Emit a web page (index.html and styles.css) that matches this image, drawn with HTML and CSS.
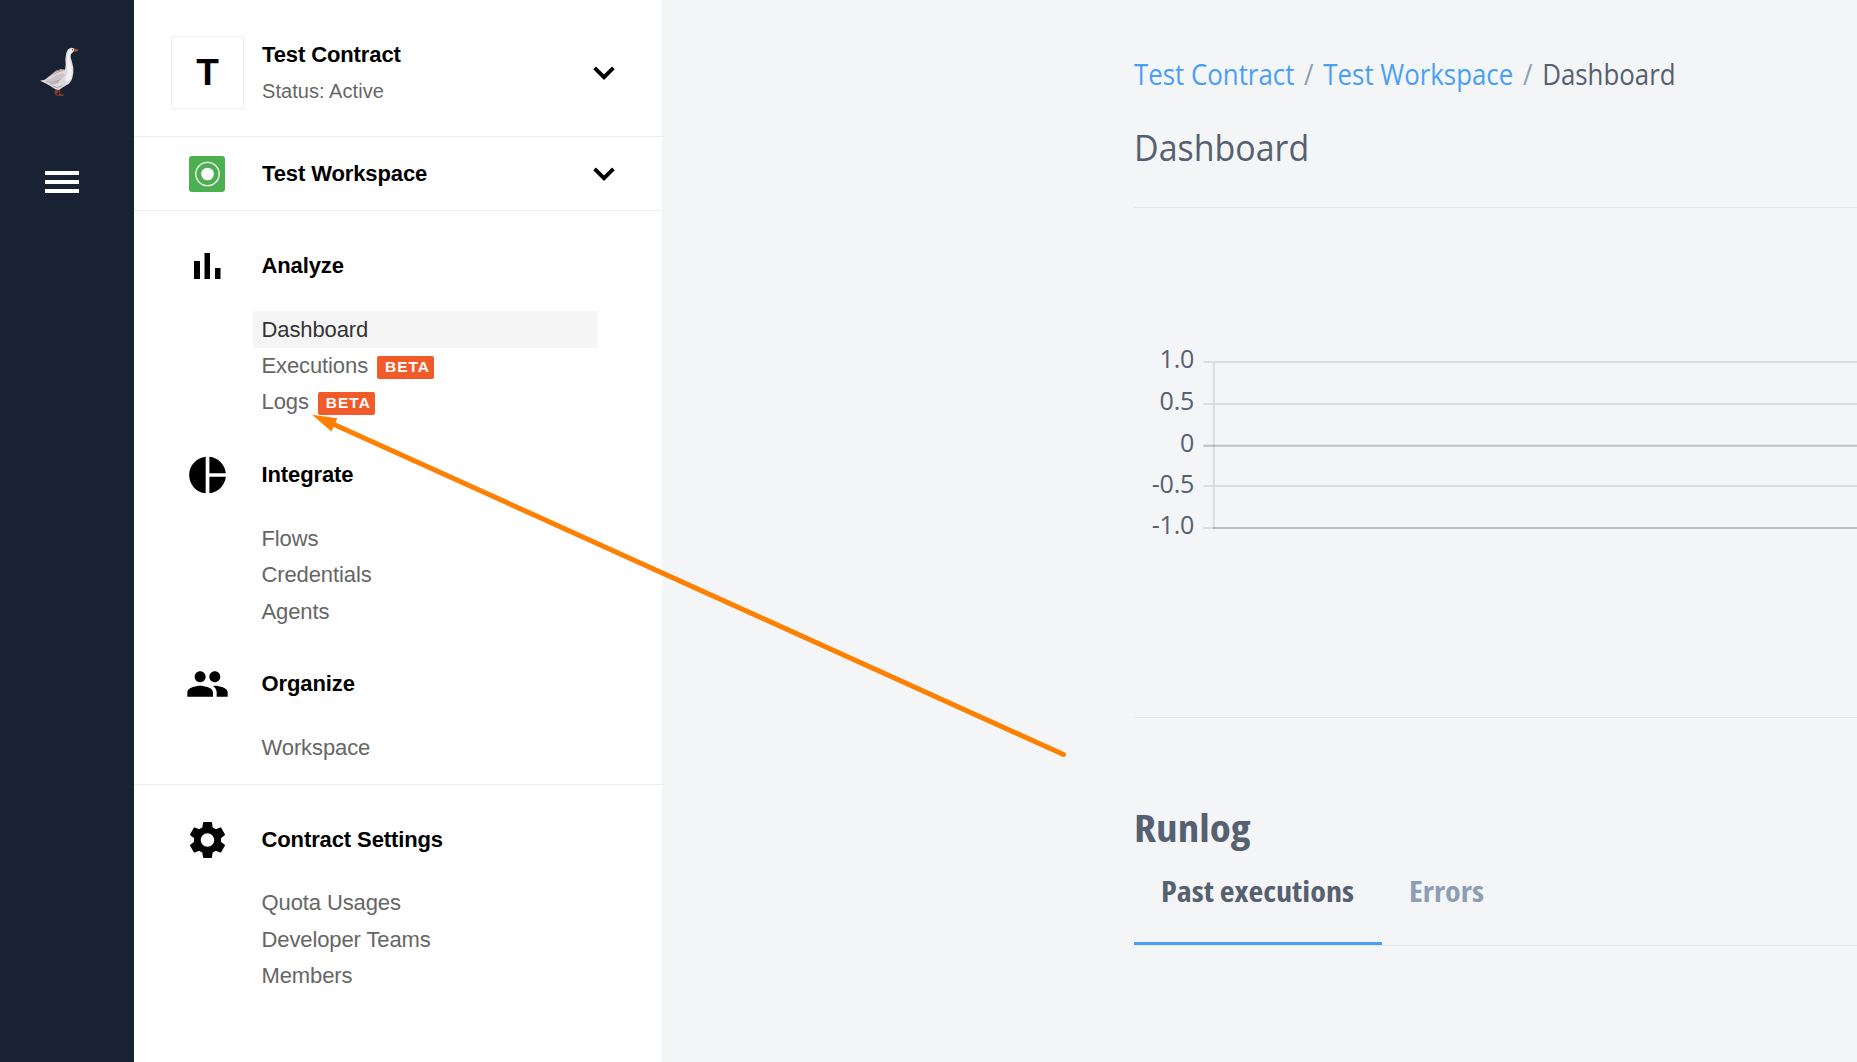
FILE: index.html
```
<!DOCTYPE html>
<html lang="en">
<head>
<meta charset="utf-8">
<title>Dashboard</title>
<link rel="stylesheet" href="styles.css">
</head>
<body>
<div class="app">
  <aside class="rail">
    <svg class="goose" viewBox="60 50 120 150" aria-label="Goose">
      <path d="M108 176l-5 9 3 9 8 3-3-7 7-11zM116 177l2 13-5 7h18l-1-5-9-2-1-12z" fill="#7d3b27"/>
      <path d="M60 151l14-3 12-9 12-9 10-9 14-4 13 1 2-14-1-18 3-19 5-10 9-5 9 2 2 5-5 7-6 5-1 10 4 14 4 17v16l-4 19-9 13-17 10-13 9-11-2-14-9-13-8-9-4z" fill="#dddadb"/>
      <path d="M142 72l4-10 8-5 6 3-6 8-5 6 0 14 4 16 4 20-4 20-12 12-5-10 6-22-2-26z" fill="#f1f0f3"/>
      <path d="M75 150l19-6 18-11 16-4 7 6-11 12-13 9-17-2z" fill="#c9c3c4"/>
      <path d="M78 154l17 2 14-2 13-7M89 161l15-1 12-5M101 133l13-8 16-5M98 167l13 5 16-6" fill="none" stroke="#a0928f" stroke-width="2.4"/>
      <path d="M82 142l24-19 15-4" fill="none" stroke="#8b6b60" stroke-width="2.4"/>
      <path d="M161 54l8 3 8 1-4 4-9 3z" fill="#b1512e"/>
      <rect x="156" y="57" width="3" height="3" fill="#29272c"/>
    </svg>
    <div class="burger"><i></i><i></i><i></i></div>
  </aside>

  <nav class="side">
    <div class="contract">
      <div class="avatar">T</div>
      <div class="who"><b>Test Contract</b><span>Status: Active</span></div>
      <svg class="chev" viewBox="0 0 22 14"><path d="M1.6 1.8L11 11.2l9.400-9.400" /></svg>
    </div>
    <div class="workspace">
      <svg class="ws" viewBox="0 0 36 36"><rect width="36" height="36" rx="3" fill="#4caf50"/><circle cx="18.500" cy="18" r="11.700" fill="none" stroke="#fff" stroke-width="1.300"/><circle cx="18.500" cy="18" r="6.300" fill="#fff"/></svg>
      <b>Test Workspace</b>
      <svg class="chev" viewBox="0 0 22 14"><path d="M1.6 1.8L11 11.2l9.400-9.400" /></svg>
    </div>
    <div class="groups">
      <section>
        <h3><svg viewBox="0 0 44 44"><path d="M8.500 17h6v18h-6zM19 9h5.500v26H19zM29.500 24H35v11h-5.500z"/></svg>Analyze</h3>
        <ul><li class="on">Dashboard</li><li>Executions<em>BETA</em></li><li>Logs<em>BETA</em></li></ul>
      </section>
      <section>
        <h3><svg viewBox="0 0 24 24"><path d="M11 2v20c-5.070-.5-9-4.790-9-10s3.930-9.500 9-10zm2.030 0v8.990H22c-.47-4.740-4.240-8.520-8.970-8.990zm0 11.010V22c4.740-.47 8.500-4.250 8.970-8.990h-8.970z"/></svg>Integrate</h3>
        <ul><li>Flows</li><li>Credentials</li><li>Agents</li></ul>
      </section>
      <section>
        <h3><svg viewBox="0 0 24 24"><path d="M16 11c1.660 0 2.990-1.340 2.990-3S17.660 5 16 5c-1.660 0-3 1.340-3 3s1.340 3 3 3zm-8 0c1.660 0 2.990-1.340 2.990-3S9.660 5 8 5C6.340 5 5 6.340 5 8s1.340 3 3 3zm0 2c-2.330 0-7 1.170-7 3.500V19h14v-2.500c0-2.330-4.670-3.500-7-3.500zm8 0c-.29 0-.62.02-.97.05 1.160.84 1.970 1.970 1.970 3.450V19h6v-2.500c0-2.330-4.670-3.500-7-3.500z"/></svg>Organize</h3>
        <ul><li>Workspace</li></ul>
      </section>
    </div>
    <div class="groups settings">
      <section>
        <h3><svg class="gear" viewBox="0 0 24 24"><path d="M19.14,12.94c0.04-0.3,0.06-0.61,0.06-0.94c0-0.32-0.02-0.64-0.07-0.94l2.03-1.58c0.18-0.14,0.23-0.41,0.12-0.61 l-1.92-3.32c-0.12-0.22-0.37-0.29-0.59-0.22l-2.39,0.96c-0.5-0.38-1.03-0.7-1.62-0.94L14.4,2.81c-0.04-0.24-0.24-0.41-0.48-0.41 h-3.84c-0.24,0-0.43,0.17-0.47,0.41L9.25,5.35C8.66,5.59,8.12,5.92,7.63,6.29L5.24,5.33c-0.22-0.08-0.47,0-0.59,0.22L2.74,8.87 C2.62,9.08,2.66,9.34,2.86,9.48l2.03,1.58C4.84,11.36,4.8,11.69,4.8,12s0.02,0.64,0.07,0.94l-2.03,1.58 c-0.18,0.14-0.23,0.41-0.12,0.61l1.92,3.32c0.12,0.22,0.37,0.29,0.59,0.22l2.39-0.96c0.5,0.38,1.03,0.7,1.62,0.94l0.36,2.54 c0.05,0.24,0.24,0.41,0.48,0.41h3.84c0.24,0,0.44-0.17,0.47-0.41l0.36-2.54c0.59-0.24,1.13-0.56,1.62-0.94l2.39,0.96 c0.22,0.08,0.47,0,0.59-0.22l1.92-3.32c0.12-0.22,0.07-0.47-0.12-0.61L19.14,12.94z M12,15.6c-1.98,0-3.6-1.62-3.6-3.6 s1.62-3.6,3.6-3.6s3.6,1.62,3.6,3.6S13.98,15.6,12,15.6z"/></svg>Contract Settings</h3>
        <ul><li>Quota Usages</li><li>Developer Teams</li><li>Members</li></ul>
      </section>
    </div>
  </nav>

  <main>
    <div class="crumbs"><a>Test Contract</a><i>/</i><a>Test Workspace</a><i>/</i><span>Dashboard</span></div>
    <h1>Dashboard</h1>
    <div class="panel">
      <svg class="chart" width="723" height="220" viewBox="1134 325 723 220">
        <g fill="none" stroke="#000" stroke-width="2">
          <path stroke-opacity=".1" d="M1203.500 362H1857M1203.500 404H1857M1203.500 486H1857M1203.500 528H1214M1213.800 361V528"/>
          <path stroke-opacity=".22" d="M1203.500 445.700H1857M1213 528H1857"/>
        </g>
        <g class="ticks" text-anchor="end">
          <text x="1194" y="368">1.0</text><text x="1194" y="410">0.5</text><text x="1194" y="452">0</text><text x="1194" y="492.500">-0.5</text><text x="1194" y="534">-1.0</text>
        </g>
      </svg>
    </div>
    <h2>Runlog</h2>
    <div class="tabs"><div class="tab active"><span>Past executions</span></div><div class="tab"><span>Errors</span></div></div>
  </main>
</div>
<svg class="arrow" width="1857" height="1062" viewBox="0 0 1857 1062">
  <path d="M333 424L1063.500 754.500" stroke="#ff8000" stroke-width="5" stroke-linecap="round"/>
  <path d="M312 414.800L337.300 418.300L331.500 431.500z" fill="#ff8000"/>
</svg>
</body>
</html>
```
FILE: styles.css
```
* { box-sizing: border-box; }
body { margin: 0; font-family: "Liberation Sans", Arial, sans-serif; font-size: 22px; background: #f3f5f7; overflow: hidden; }
.app { display: flex; width: 1857px; height: 1062px; }
i, em { font-style: normal; }

.rail { width: 134px; background: #192232; padding: 47px 0 0 40px; }
.goose { display: block; width: 40px; height: 50px; }
.burger { display: flex; flex-direction: column; gap: 5px; margin: 74px 0 0 5px; }
.burger i { width: 34px; height: 4px; background: #fff; }

.side { width: 528px; background: #fff; color: #000; letter-spacing: -.11px; }
.contract { height: 137px; border-bottom: 1px solid #eee; display: flex; align-items: flex-start; padding: 36px 47px 0 37px; }
.avatar { width: 73px; height: 73px; border: 1px solid #eee; font-size: 37px; font-weight: bold; display: flex; align-items: center; justify-content: center; }
.who { flex: 1; padding: 1px 0 0 18px; display: flex; flex-direction: column; }
.who b { line-height: 36px; }
.who span { font-size: 20px; line-height: 37px; color: #666; letter-spacing: .05px; }
.chev { width: 22px; height: 14px; fill: none; stroke: #000; stroke-width: 3.8; }
.contract .chev { margin-top: 30px; }
.workspace { height: 74px; border-bottom: 1px solid #eee; display: flex; align-items: center; padding: 0 47px 0 55px; }
.ws { width: 36px; height: 36px; }
.workspace b { flex: 1; padding-left: 37px; }

.groups { padding-top: 33px; }
.groups section { margin-bottom: 32.5px; }
.groups section:last-child { margin-bottom: 18.5px; }
.settings { border-top: 1px solid #eee; padding-top: 32px; }
h3 { margin: 0 0 23px; height: 44px; display: flex; align-items: center; gap: 31.5px; padding-left: 51px; font-size: 22px; }
h3 svg { width: 45px; height: 44px; }
.settings h3 { padding-top: 1px; }
h3 .gear { height: 46px; }
ul { list-style: none; margin: 0 64px 0 119px; padding: 0; }
li { height: 36.5px; line-height: 36.5px; padding-left: 8.5px; color: #666; display: flex; }
li:nth-child(odd), .settings li { line-height: 37.5px; }
section:first-child li:last-child { line-height: 36.5px; }
.settings section:first-child li { line-height: 37.5px; }
li.on { background: #f5f5f5; color: #333; }
em { margin: 8px 0 0 9px; width: 57px; height: 23px; border-radius: 2px; background: #f15a29; color: #fff; font-size: 15.500px; font-weight: bold; letter-spacing: 1px; line-height: 22px; padding-left: 8px; }

main { flex: 1; min-width: 0; padding: 50px 0 0 472px; font-family: "Open Sans", "Noto Sans", sans-serif; color: #556070; }
.crumbs { width: max-content; height: 48px; line-height: 48px; font-size: 29px; display: flex; white-space: nowrap; transform: scaleX(.891); transform-origin: left; }
.crumbs a { color: #4a9ff5; }
.crumbs i { width: 32.5px; text-align: center; color: #8c9db5; }
h1 { margin: 19px 0 0; height: 60px; line-height: 60px; font-size: 36.500px; font-weight: normal; transform: scaleX(.93); transform-origin: left; }
.panel { margin-top: 30px; height: 511px; border: 1px solid #e5e7ea; border-width: 1px 0; padding-top: 117px; }
.chart { display: block; }
.ticks text { font-size: 25px; letter-spacing: -.25px; fill: #556070; }
h2 { width: max-content; margin: 79.5px 0 0; height: 60px; line-height: 60px; font-size: 37px; font-stretch: 75%; transform: scaleX(1.165); transform-origin: left; }
.tabs { display: flex; height: 88px; border-bottom: 1px solid #e2e4e8; font-size: 29px; font-weight: bold; font-stretch: 75%; }
.tab { padding: 0 27px; line-height: 66px; height: 87px; color: #8c9db5; }
.tab span { display: inline-block; white-space: nowrap; transform: scaleX(1.11); transform-origin: left; }
.tab.active { width: 248px; border-bottom: 3px solid #4a9ff5; color: #556070; }

.arrow { position: absolute; left: 0; top: 0; fill: none; pointer-events: none; }
```
